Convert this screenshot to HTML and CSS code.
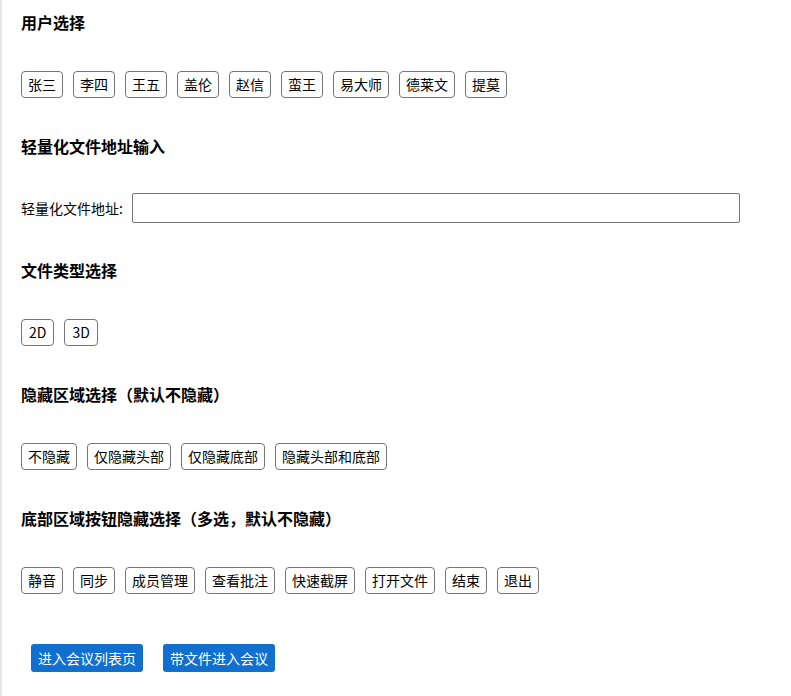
FILE: index.html
```html
<!DOCTYPE html>
<html lang="zh-CN">
<head>
<meta charset="utf-8">
<title>会议设置</title>
<link rel="stylesheet" href="styles.css">
</head>
<body>
<div class="page">
  <section class="section">
    <h4 class="title">用户选择</h4>
    <div class="row">
      <button class="opt">张三</button>
      <button class="opt">李四</button>
      <button class="opt">王五</button>
      <button class="opt">盖伦</button>
      <button class="opt">赵信</button>
      <button class="opt">蛮王</button>
      <button class="opt">易大师</button>
      <button class="opt">德莱文</button>
      <button class="opt">提莫</button>
    </div>
  </section>
  <section class="section">
    <h4 class="title">轻量化文件地址输入</h4>
    <div class="row row-input">
      <label class="label" for="addr">轻量化文件地址:</label>
      <input id="addr" class="input" type="text">
    </div>
  </section>
  <section class="section">
    <h4 class="title">文件类型选择</h4>
    <div class="row">
      <button class="opt opt-latin">2D</button>
      <button class="opt opt-latin">3D</button>
    </div>
  </section>
  <section class="section">
    <h4 class="title">隐藏区域选择（默认不隐藏）</h4>
    <div class="row">
      <button class="opt">不隐藏</button>
      <button class="opt">仅隐藏头部</button>
      <button class="opt">仅隐藏底部</button>
      <button class="opt">隐藏头部和底部</button>
    </div>
  </section>
  <section class="section">
    <h4 class="title">底部区域按钮隐藏选择（多选，默认不隐藏）</h4>
    <div class="row">
      <button class="opt">静音</button>
      <button class="opt">同步</button>
      <button class="opt">成员管理</button>
      <button class="opt">查看批注</button>
      <button class="opt">快速截屏</button>
      <button class="opt">打开文件</button>
      <button class="opt">结束</button>
      <button class="opt">退出</button>
    </div>
  </section>
  <div class="actions">
    <button class="primary">进入会议列表页</button>
    <button class="primary">带文件进入会议</button>
  </div>
</div>
</body>
</html>
```

FILE: styles.css
```css
html, body {
  margin: 0;
  padding: 0;
  background: #fff;
}
body {
  font-family: "Noto Sans CJK SC", "Noto Sans", sans-serif;
  color: #000;
}
.page {
  border-left: 2px solid #e6e6e6;
  padding: 11px 0 0 19px;
  min-height: 685px;
}
.section {
  margin-bottom: 36px;
}
.title {
  margin: 0 0 36px 0;
  font-size: 16px;
  line-height: 22px;
  font-weight: bold;
}
.row {
  display: flex;
  align-items: center;
  gap: 10px;
  height: 30px;
}
.row-input {
  gap: 9px;
}
.opt {
  font-family: inherit;
  font-size: 14px;
  line-height: 19px;
  height: 27px;
  padding: 3px 6px;
  margin: 0;
  background: #fff;
  color: #000;
  border: 1px solid #767676;
  border-radius: 4px;
}
.opt-latin {
  padding: 3px 7px;
}
.label {
  font-size: 14px;
  line-height: 20px;
}
.input {
  width: 608px;
  height: 30px;
  box-sizing: border-box;
  margin: 0;
  border: 1px solid #767676;
  border-radius: 2px;
  padding: 0 4px;
  font-family: inherit;
  font-size: 14px;
}
.actions {
  display: flex;
  gap: 20px;
  padding: 13px 0 0 10px;
}
.primary {
  font-family: inherit;
  font-size: 14px;
  line-height: 20px;
  height: 28px;
  padding: 4px 7px;
  margin: 0;
  background: #1170cf;
  color: #fff;
  border: none;
  border-radius: 3px;
}
```
